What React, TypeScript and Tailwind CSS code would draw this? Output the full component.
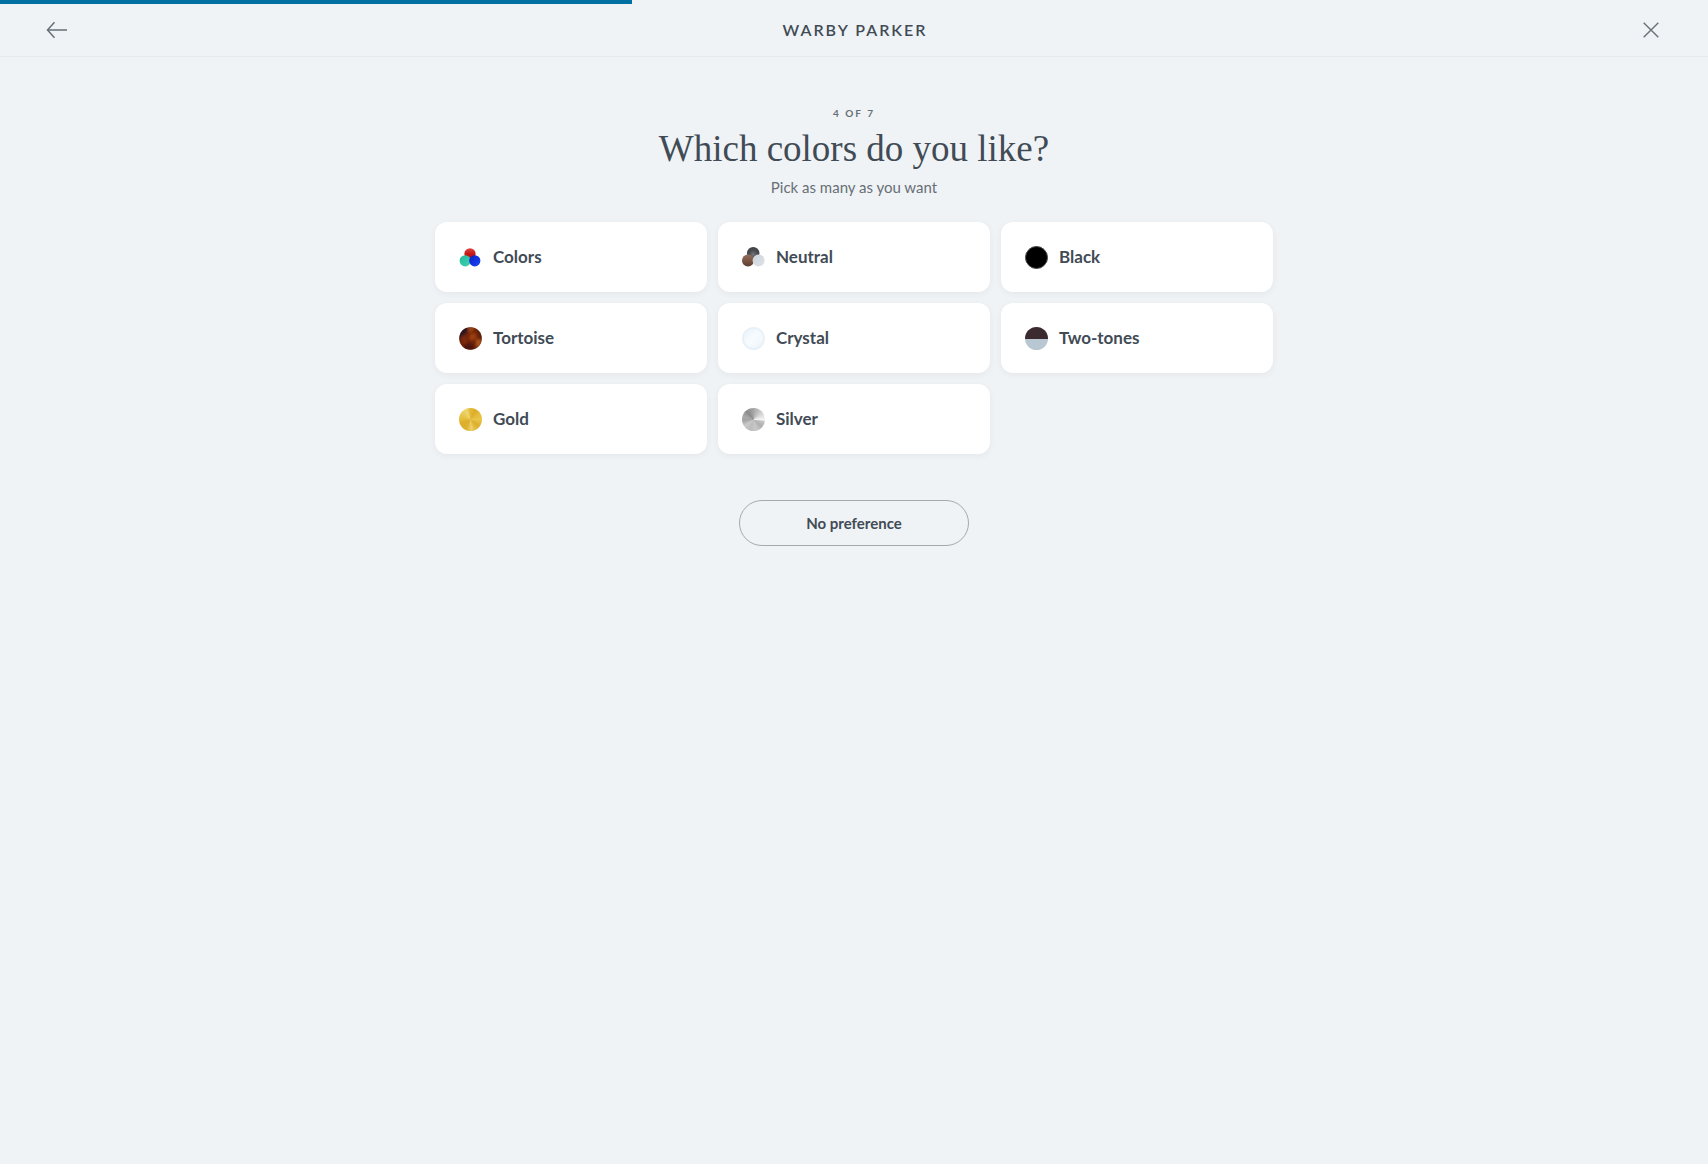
import { useState, type ReactNode } from "react";

function BackIcon() {
  return (
    <svg viewBox="0 0 22 18" className="h-[18px] w-[22px]" fill="none" stroke="currentColor" strokeWidth="1.5" aria-hidden="true">
      <path d="M21 9H1.5M8.5 1.2L1.5 9l7 7.8" />
    </svg>
  );
}

function CloseIcon() {
  return (
    <svg viewBox="0 0 16 16" className="h-4 w-4" fill="none" stroke="currentColor" strokeWidth="1.4" aria-hidden="true">
      <path d="M0.7 0.7l14.6 14.6M15.3 0.7L0.7 15.3" />
    </svg>
  );
}

function ColorsSwatch() {
  return (
    <svg viewBox="0 0 23 23" className="size-[23px]" aria-hidden="true">
      <defs>
        <linearGradient id="c-red" x1="0" y1="0" x2="0" y2="1">
          <stop offset="0" stopColor="#d94a46" />
          <stop offset="0.5" stopColor="#c81616" />
          <stop offset="1" stopColor="#a80c14" />
        </linearGradient>
        <linearGradient id="c-green" x1="0" y1="0" x2="1" y2="1">
          <stop offset="0" stopColor="#25b898" />
          <stop offset="1" stopColor="#3fd2b4" />
        </linearGradient>
        <linearGradient id="c-blue" x1="0" y1="0" x2="1" y2="1">
          <stop offset="0" stopColor="#0a1fc4" />
          <stop offset="1" stopColor="#1c48f5" />
        </linearGradient>
      </defs>
      <circle cx="11" cy="7.8" r="5.6" fill="url(#c-red)" />
      <circle cx="6.2" cy="14.8" r="5.6" fill="url(#c-green)" />
      <circle cx="15.8" cy="14.8" r="5.6" fill="url(#c-blue)" />
    </svg>
  );
}

function NeutralSwatch() {
  return (
    <svg viewBox="0 0 23 23" className="size-[23px]" aria-hidden="true">
      <defs>
        <radialGradient id="n-dark" cx="0.5" cy="0.6" r="0.6">
          <stop offset="0" stopColor="#77787b" />
          <stop offset="0.5" stopColor="#4a4c50" />
          <stop offset="1" stopColor="#3f4145" />
        </radialGradient>
        <linearGradient id="n-brown" x1="0" y1="0" x2="0" y2="1">
          <stop offset="0" stopColor="#91705c" />
          <stop offset="0.5" stopColor="#7a5643" />
          <stop offset="1" stopColor="#5b3d2f" />
        </linearGradient>
        <linearGradient id="n-light" x1="0" y1="0" x2="1" y2="1">
          <stop offset="0" stopColor="#ccd3db" />
          <stop offset="1" stopColor="#dfe3e8" />
        </linearGradient>
      </defs>
      <circle cx="11.2" cy="7.2" r="6.2" fill="url(#n-dark)" />
      <circle cx="6" cy="14.6" r="6" fill="url(#n-brown)" />
      <circle cx="16.6" cy="14.6" r="6" fill="url(#n-light)" />
    </svg>
  );
}

function BlackSwatch() {
  return <span className="size-[23px] rounded-full border border-[#4b4b4b] bg-black" />;
}

function TortoiseSwatch() {
  return (
    <svg viewBox="0 0 23 23" className="size-[23px]" aria-hidden="true">
      <defs>
        <clipPath id="t-clip">
          <circle cx="11.5" cy="11.5" r="11.3" />
        </clipPath>
        <filter id="t-soft">
          <feGaussianBlur stdDeviation="1.1" />
        </filter>
      </defs>
      <g clipPath="url(#t-clip)">
        <rect width="23" height="23" fill="#6e250c" />
        <g filter="url(#t-soft)">
          <path d="M0 0h9L8 5 3 9l-3 4z" fill="#2b1220" />
          <path d="M9 0h7l-2 4-4 2z" fill="#9a4312" />
          <path d="M11 7l5-1 2 4-4 4-4-2z" fill="#9c3c0c" />
          <path d="M16 0l7 4v9l-3-2-1-6z" fill="#5a200e" />
          <path d="M3 10l4-1 1 6-3 3z" fill="#7e2a0c" />
          <path d="M17 12l6 1-2 6-4 1z" fill="#a9521a" />
          <path d="M4 19l6-3 5 3-1 4H6z" fill="#4b120a" />
        </g>
      </g>
    </svg>
  );
}

function CrystalSwatch() {
  return (
    <span className="size-[23px] rounded-full border-2 border-[#e8f1f8] bg-linear-to-br from-[#e9f4fb] via-[#f7fbfe] to-[#edf5fa]" />
  );
}

function TwoToneSwatch() {
  return (
    <span className="flex size-[23px] flex-col overflow-hidden rounded-full">
      <span className="flex-1 bg-[#3b2b31]" />
      <span className="h-[11px] bg-[#b9c7d2]" />
    </span>
  );
}

function GoldSwatch() {
  return (
    <span className="size-[23px] rounded-full bg-[conic-gradient(#e3b934,#dcae2a_30deg,#e5bd3c_60deg,#e9c54a_90deg,#dcae2a_130deg,#e6c04a_160deg,#ecd06a_175deg,#ddb030_205deg,#dcae2a_245deg,#e6c040_280deg,#ebcb58_310deg,#efd672_335deg,#e3b934)]" />
  );
}

function SilverSwatch() {
  return (
    <span className="size-[23px] rounded-full bg-[conic-gradient(#a6a6a6,#c4c4c4_35deg,#dedede_65deg,#f6f6f6_92deg,#c2c2c2_102deg,#b0b0b0_130deg,#c8c8c8_165deg,#bcbcbc_200deg,#cacaca_235deg,#a4a4a4_265deg,#a8a8a8_290deg,#8a8a8a_320deg,#a6a6a6)]" />
  );
}

const options: { label: string; swatch: ReactNode }[] = [
  { label: "Colors", swatch: <ColorsSwatch /> },
  { label: "Neutral", swatch: <NeutralSwatch /> },
  { label: "Black", swatch: <BlackSwatch /> },
  { label: "Tortoise", swatch: <TortoiseSwatch /> },
  { label: "Crystal", swatch: <CrystalSwatch /> },
  { label: "Two-tones", swatch: <TwoToneSwatch /> },
  { label: "Gold", swatch: <GoldSwatch /> },
  { label: "Silver", swatch: <SilverSwatch /> },
];

export default function App() {
  const [picked, setPicked] = useState<string[]>([]);

  const toggle = (label: string) =>
    setPicked((current) =>
      current.includes(label) ? current.filter((item) => item !== label) : [...current, label],
    );

  return (
    <div className="min-h-screen bg-[#f0f3f5] font-['Lato',sans-serif] text-[#414b56]">
      <div
        role="progressbar"
        aria-label="Quiz progress"
        aria-valuemin={0}
        aria-valuemax={100}
        aria-valuenow={37}
        className="h-1"
      >
        <div className="h-full w-[37%] bg-[#0070a3]" />
      </div>

      <header className="flex h-[53px] items-center justify-between border-b border-[#e6e9ec] px-[46px]">
        <button type="button" aria-label="Back" className="text-[#676f77]">
          <BackIcon />
        </button>
        <a href="#" className="pl-[2px] text-base leading-6 font-semibold tracking-[2px]">
          WARBY PARKER
        </a>
        <button type="button" aria-label="Close" className="px-[3px] text-[#676f77]">
          <CloseIcon />
        </button>
      </header>

      <main className="mx-auto flex max-w-[870px] flex-col items-center px-4 pt-12">
        <p className="text-[10px] leading-4 font-bold tracking-[2px] text-[#676f77]">4 OF 7</p>
        <h1 className="mt-[5px] text-center font-['Liberation_Serif',serif] text-[37px] leading-[46px]">
          Which colors do you like?
        </h1>
        <p className="mt-[3px] text-[15px] leading-6 text-[#676f77]">Pick as many as you want</p>

        <div className="mt-[23px] grid w-full grid-cols-1 gap-[11px] sm:grid-cols-3">
          {options.map(({ label, swatch }) => (
            <button
              key={label}
              type="button"
              aria-pressed={picked.includes(label)}
              onClick={() => toggle(label)}
              className="flex h-[70px] items-center gap-[11px] rounded-xl bg-white px-6 text-left shadow-[0_2px_6px_rgba(65,75,86,0.06)] aria-pressed:ring-2 aria-pressed:ring-[#0070a3]"
            >
              {swatch}
              <span className="text-[17px] leading-6 font-bold">{label}</span>
            </button>
          ))}
        </div>

        <button
          type="button"
          onClick={() => setPicked([])}
          className="mt-[46px] h-[46px] w-[230px] rounded-full border border-[#a5a9ae] text-[15px] font-bold"
        >
          No preference
        </button>
      </main>
    </div>
  );
}
